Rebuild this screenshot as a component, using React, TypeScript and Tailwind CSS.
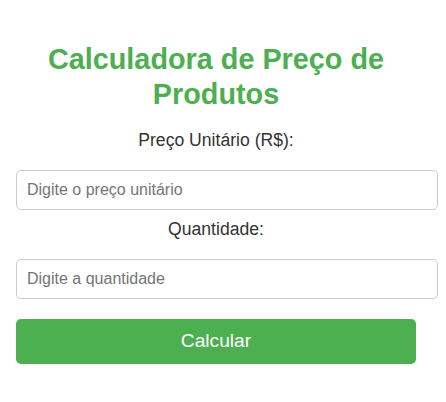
import React from "react";

export default function App() {
  return (
    <div
      className="w-[446px] h-[402px] bg-white overflow-hidden"
      style={{ fontFamily: '"Liberation Sans", Arial, sans-serif' }}
    >
      <div className="ml-4 w-[400px] pt-[42px] flex flex-col">
        <h1 className="text-center font-bold text-[28.8px] leading-[35px] text-[#4CAF50]">
          Calculadora de Preço de Produtos
        </h1>
        <label className="mt-[18px] block text-center text-[17.6px] leading-[20px] text-[#333333]">
          Preço Unitário (R$):
        </label>
        <input
          type="text"
          placeholder="Digite o preço unitário"
          className="mt-[20px] block w-[422px] h-[40px] box-border px-[10px] border border-[#cccccc] rounded-[5px] text-[16px] leading-[18px] text-[#333333] placeholder:text-[#757575] bg-white outline-none"
        />
        <label className="mt-[9px] block text-center text-[17.6px] leading-[20px] text-[#333333]">
          Quantidade:
        </label>
        <input
          type="text"
          placeholder="Digite a quantidade"
          className="mt-[20px] block w-[422px] h-[40px] box-border px-[10px] border border-[#cccccc] rounded-[5px] text-[16px] leading-[18px] text-[#333333] placeholder:text-[#757575] bg-white outline-none"
        />
        <button
          type="button"
          className="mt-[20px] w-[400px] h-[45px] bg-[#4CAF50] text-white text-[19.2px] rounded-[5px]"
        >
          Calcular
        </button>
      </div>
    </div>
  );
}
